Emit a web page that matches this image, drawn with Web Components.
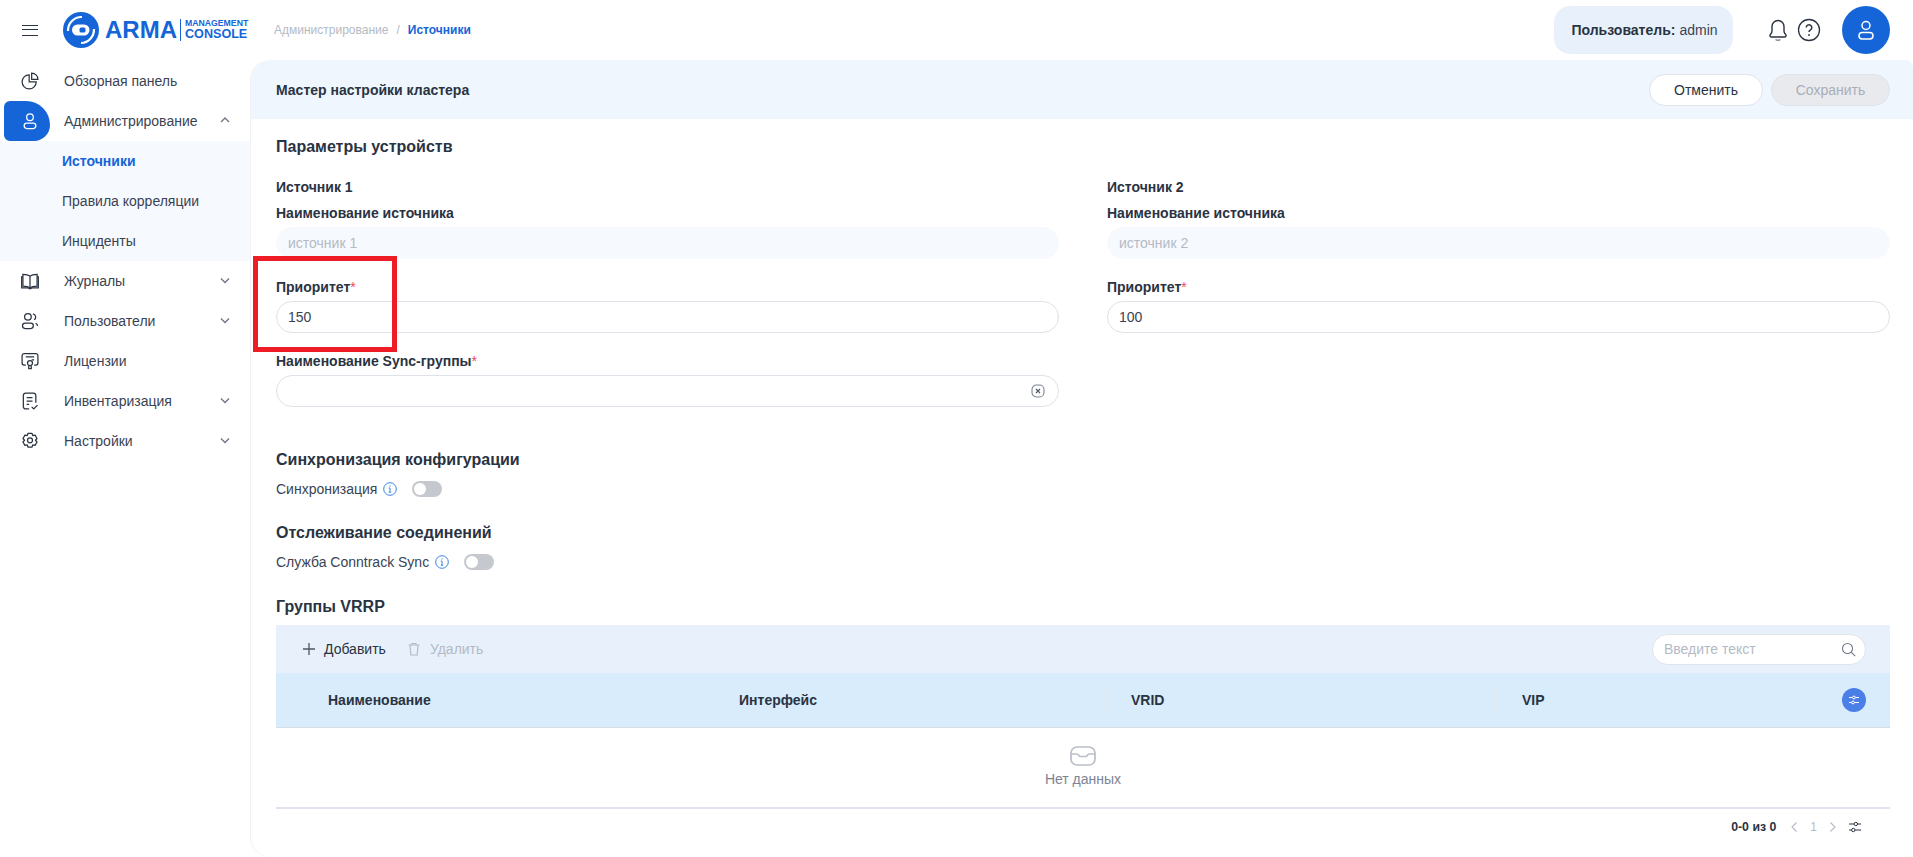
<!DOCTYPE html>
<html lang="ru">
<head>
<meta charset="utf-8">
<title>ARMA Management Console</title>
<style>
html, body { margin: 0; height: 100%; background: #fff; }
body { font-family: "Liberation Sans", Arial, sans-serif; color: #2a3342; overflow: hidden; }
</style>
</head>
<body>
<app-shell>
  <app-header slot="header"></app-header>
  <side-nav slot="nav">
    <nav-item icon="chart">Обзорная панель</nav-item>
    <nav-item icon="user" active chevron="up">Администрирование</nav-item>
    <nav-sub current>Источники</nav-sub>
    <nav-sub>Правила корреляции</nav-sub>
    <nav-sub>Инциденты</nav-sub>
    <nav-item icon="book" chevron="down">Журналы</nav-item>
    <nav-item icon="users" chevron="down">Пользователи</nav-item>
    <nav-item icon="license">Лицензии</nav-item>
    <nav-item icon="inventory" chevron="down">Инвентаризация</nav-item>
    <nav-item icon="gear" chevron="down">Настройки</nav-item>
  </side-nav>
  <cluster-wizard slot="main"></cluster-wizard>
</app-shell>

<script>
const ICONS = {
  chart: '<path d="M11 4.500a8.500 8.500 0 1 0 8.500 8.500H11z"/><path d="M14 2.500a7.500 7.500 0 0 1 7.500 7.500H14z"/>',
  user: '<circle cx="12" cy="7.500" r="4"/><rect x="5" y="14.500" width="14" height="6.500" rx="3.200"/>',
  book: '<path d="M12 6.500C10 4.500 7 4 3.500 4v14c3.500 0 6.500 .5 8.500 2.500 2-2 5-2.500 8.500-2.500V4c-3.500 0-6.500 .5-8.500 2.500z"/><path d="M12 6.500v14"/><path d="M3.500 7H2v13.200h7.500l2.500 1.300 2.500-1.300H22V7h-1.500"/>',
  users: '<circle cx="9.500" cy="7" r="4"/><rect x="3" y="14.500" width="13" height="6.500" rx="3.200"/><path d="M15.500 3.500a3.800 3.800 0 0 1 1.500 7M18.500 15a3 3 0 0 1 2.500 3"/>',
  license: '<path d="M7 17H5a2.500 2.500 0 0 1-2.500-2.500v-9A2.500 2.500 0 0 1 5 3h14a2.500 2.500 0 0 1 2.500 2.500v9A2.500 2.500 0 0 1 19 17h-2"/><path d="M7 7h10M14 10.500h3"/><circle cx="12" cy="14.500" r="3"/><path d="M10.500 18v3h3v-3"/>',
  inventory: '<path d="M11 21.500H7a3 3 0 0 1-3-3v-13a3 3 0 0 1 3-3h9a3 3 0 0 1 3 3V14"/><path d="M8 8h7M8 12h7M8 16h3"/><path d="M14 19l2.500 2.500 4.500-4.500"/>',
  gear: '<path d="M9.700 2.800h4.600l1 2.700 2.800-.5 2.300 4-1.800 2.100 1.800 2.100-2.300 4-2.800-.5-1 2.700H9.700l-1-2.700-2.800.5-2.300-4 1.800-2.100-1.800-2.100 2.300-4 2.800.5z" stroke-linejoin="round"/><circle cx="12" cy="11.100" r="3"/>'
};

// small helper so every element below stays short
function shadow(el, html) {
  el.attachShadow({ mode: "open" }).innerHTML = html;
}

class AppShell extends HTMLElement {
  constructor() {
    super();
    shadow(this, `
      <style>
        :host { display: grid; grid-template-columns: 251px 1fr; grid-template-rows: 60px 1fr; height: 857px; }
        .top { grid-column: 1 / 3; }
      </style>
      <div class="top"><slot name="header"></slot></div>
      <slot name="nav"></slot>
      <slot name="main"></slot>`);
  }
}

class AppHeader extends HTMLElement {
  constructor() {
    super();
    shadow(this, `
      <style>
        :host { display: flex; align-items: center; height: 60px; padding: 0 23px 0 22px; box-sizing: border-box; }
        .burger { width: 16px; height: 11px; border-top: 1.500px solid #2a3342; border-bottom: 1.500px solid #2a3342; position: relative; box-sizing: border-box; margin-right: 25px; }
        .burger::after { content: ""; position: absolute; left: 0; right: 0; top: 3.200px; border-top: 1.500px solid #2a3342; }
        .logo { display: flex; align-items: center; color: #1565d8; width: 211px; }
        .arma { font: 700 24px/1 "Liberation Sans", sans-serif; margin: 0 3px 0 6px; }
        .sub { border-left: 1px solid #1565d8; padding-left: 4px; height: 22px; display: flex; flex-direction: column; justify-content: center; }
        .sub b { font-size: 8.700px; line-height: 9px; font-weight: 700; }
        .sub span { font-size: 12.600px; line-height: 13px; font-weight: 700; }
        .crumbs { font-size: 12px; color: #b4bac4; display: flex; gap: 8px; flex: 1; }
        .crumbs b { color: #1565d8; font-weight: 700; }
        .pill { width: 179px; height: 48px; box-sizing: border-box; padding-left: 2px; border-radius: 16px; background: #e8f1fb; display: flex; align-items: center; justify-content: center; font-size: 14px; color: #3b4454; }
        .pill b { font-weight: 700; color: #2a3342; margin-right: 4px; }
        .tools { display: flex; align-items: center; margin: 0 21px 0 34px; gap: 8px; }
        .avatar { width: 48px; height: 48px; border-radius: 50%; background: #1565d8; display: flex; align-items: center; justify-content: center; }
        svg { display: block; }
      </style>
      <div class="burger"></div>
      <div class="logo">
        <svg width="36" height="36" viewBox="0 0 36 36">
          <circle cx="18" cy="18" r="18" fill="#1565d8"/>
          <path d="M5 19A13.500 13.500 0 0 1 19 5" fill="none" stroke="#fff" stroke-width="2.200"/>
          <path d="M31 17A13.500 13.500 0 0 1 18 31" fill="none" stroke="#fff" stroke-width="2.200"/>
          <rect x="9" y="12.500" width="17.500" height="11" rx="5.500" fill="#fff"/>
          <rect x="16.500" y="15.500" width="6" height="5" rx="1.500" fill="#1565d8"/>
        </svg>
        <span class="arma">ARMA</span>
        <span class="sub"><b>MANAGEMENT</b><span>CONSOLE</span></span>
      </div>
      <div class="crumbs"><span>Администрирование</span><span>/</span><b>Источники</b></div>
      <div class="pill"><b>Пользователь:</b> admin</div>
      <div class="tools">
        <svg width="22" height="24" viewBox="0 0 22 24" fill="none" stroke="#2a3342" stroke-width="1.400"><path d="M11 2.500a6 6 0 0 0-6 6v4.500c0 2-1.500 3-2 4.200-.3.900.3 1.800 1.300 1.800h13.400c1 0 1.600-.9 1.300-1.800-.5-1.200-2-2.200-2-4.200V8.500a6 6 0 0 0-6-6z"/><path d="M8.500 21.500c1.500 1 3.500 1 5 0" stroke="#7b8494"/></svg>
        <svg width="24" height="24" viewBox="0 0 24 24" fill="none" stroke="#2a3342" stroke-width="1.300"><circle cx="12" cy="12" r="10.500"/><path d="M9.200 9.500a2.800 2.800 0 1 1 4.300 2.400c-1 .6-1.500 1.200-1.500 2.200" stroke-width="1.500"/><circle cx="12" cy="17" r=".9" fill="#2a3342" stroke="none"/></svg>
      </div>
      <div class="avatar"><svg width="24" height="24" viewBox="0 0 24 24" fill="none" stroke="#fff" stroke-width="1.500">${ICONS.user}</svg></div>`);
  }
}

class SideNav extends HTMLElement {
  constructor() {
    super();
    shadow(this, `
      <style>:host { display: flex; flex-direction: column; padding-top: 1px; }</style>
      <slot></slot>`);
  }
}

class NavItem extends HTMLElement {
  constructor() {
    super();
    const chevron = this.getAttribute("chevron");
    const active = this.hasAttribute("active");
    const arrow = chevron ? `<svg class="chev" width="12" height="12" viewBox="0 0 12 12" fill="none" stroke="#6f7785" stroke-width="1.400"><path d="${chevron === "up" ? "M2 8l4-4 4 4" : "M2 4.500l4 4 4-4"}"/></svg>` : "";
    shadow(this, `
      <style>
        :host { display: flex; align-items: center; height: 40px; font-size: 14px; color: #3a4353; }
        .tile { width: 46px; height: 40px; margin: 0 14px 0 4px; padding-left: 6px; box-sizing: border-box; display: flex; align-items: center; justify-content: center; flex: none; }
        .tile.on { background: #1565d8; border-radius: 6px 24px 16px 6px; }
        .chev { margin: -3px 0 0 auto; margin-right: 20px; }
        svg.ic { display: block; }
      </style>
      <div class="tile ${active ? "on" : ""}">
        <svg class="ic" width="20" height="20" viewBox="0 0 24 24" fill="none" stroke="${active ? "#fff" : "#2a3342"}" stroke-width="1.500">${ICONS[this.getAttribute("icon")]}</svg>
      </div>
      <slot></slot>${arrow}`);
  }
}

class NavSub extends HTMLElement {
  constructor() {
    super();
    shadow(this, `
      <style>
        :host { display: flex; align-items: center; height: 40px; padding-left: 62px; background: #f6f9fe; font-size: 14px; color: #3a4353; }
        :host([current]) { color: #1565d8; font-weight: 700; }
      </style>
      <slot></slot>`);
  }
}

class WizardCard extends HTMLElement {
  constructor() {
    super();
    shadow(this, `
      <style>
        :host { display: block; border-radius: 20px 8px 0 20px; box-shadow: -1px 0 0 #eff1f5; overflow: hidden; min-width: 0; }
        .bar { height: 59px; background: #eff6fd; display: flex; align-items: center; padding: 0 23px 0 25px; gap: 8px; }
        .bar span { flex: 1; font-size: 14px; font-weight: 700; }
        .body { padding: 0 23px 0 25px; }
        h3 { margin: 0; font-size: 16px; line-height: 20px; font-weight: 700; }
        .cols { display: grid; grid-template-columns: 783px 783px; column-gap: 48px; }
        .cols h4 { margin: 0; font-size: 14px; line-height: 18px; font-weight: 700; }
        .col { display: flex; flex-direction: column; }
        .annot { position: absolute; left: 253px; top: 256px; width: 144px; height: 96px; box-sizing: border-box; border: 5px solid #ee1c25; pointer-events: none; }
      </style>
      <div class="bar">
        <span>Мастер настройки кластера</span>
        <wizard-btn style="width:114px">Отменить</wizard-btn>
        <wizard-btn disabled style="width:119px">Сохранить</wizard-btn>
      </div>
      <div class="body">
        <h3 style="margin-top:18px">Параметры устройств</h3>
        <div class="cols" style="margin-top:21px">
          <div class="col">
            <h4>Источник 1</h4>
            <form-field label="Наименование источника" disabled style="margin-top:8px">источник 1</form-field>
            <form-field label="Приоритет" required style="margin-top:19px">150</form-field>
            <form-field label="Наименование Sync-группы" required clear style="margin-top:19px"></form-field>
          </div>
          <div class="col">
            <h4>Источник 2</h4>
            <form-field label="Наименование источника" disabled style="margin-top:8px">источник 2</form-field>
            <form-field label="Приоритет" required style="margin-top:19px">100</form-field>
          </div>
        </div>
        <h3 style="margin-top:43px">Синхронизация конфигурации</h3>
        <toggle-row style="margin-top:9px">Синхронизация</toggle-row>
        <h3 style="margin-top:24px">Отслеживание соединений</h3>
        <toggle-row style="margin-top:9px">Служба Conntrack Sync</toggle-row>
        <h3 style="margin-top:25px">Группы VRRP</h3>
        <vrrp-table style="margin-top:8px"></vrrp-table>
      </div>
      <div class="annot"></div>`);
  }
}

class WizardBtn extends HTMLElement {
  constructor() {
    super();
    shadow(this, `
      <style>
        :host { display: flex; align-items: center; justify-content: center; height: 32px; box-sizing: border-box; border-radius: 16px; border: 1px solid #dfe3ea; background: #fff; font-size: 14px; color: #2a3342; }
        :host([disabled]) { background: #e8eaee; color: #a9aeb8; }
      </style>
      <slot></slot>`);
  }
}

class FormField extends HTMLElement {
  constructor() {
    super();
    const star = this.hasAttribute("required") ? '<i>*</i>' : "";
    const clear = this.hasAttribute("clear")
      ? `<svg width="16" height="16" viewBox="0 0 16 16" fill="none" stroke="#7b8494" stroke-width="1.100"><rect x="2" y="2" width="12" height="12" rx="4.500"/><path d="M6 6l4 4M10 6l-4 4" stroke="#4d5563"/></svg>` : "";
    shadow(this, `
      <style>
        :host { display: block; }
        label { display: block; font-size: 14px; line-height: 18px; font-weight: 700; margin-bottom: 5px; }
        i { color: #f0465a; font-style: normal; font-weight: 400; }
        .box { height: 32px; box-sizing: border-box; border: 1px solid #dfe2e8; border-radius: 16px; display: flex; align-items: center; justify-content: space-between; padding: 0 12px 0 11px; font-size: 14px; color: #3a4353; }
        :host([disabled]) .box { background: #f6f9fe; border-color: #f6f9fe; color: #b4bac4; }
        svg { display: block; }
      </style>
      <label>${this.getAttribute("label")}${star}</label>
      <div class="box"><span><slot></slot></span>${clear}</div>`);
  }
}

class ToggleRow extends HTMLElement {
  constructor() {
    super();
    shadow(this, `
      <style>
        :host { display: flex; align-items: center; gap: 6px; height: 20px; font-size: 14px; color: #3a4353; }
        svg { display: block; }
        .sw { width: 30px; height: 16px; border-radius: 8px; background: #c5c8ce; position: relative; margin-left: 9px; }
        .sw::after { content: ""; position: absolute; left: 2px; top: 2px; width: 12px; height: 12px; border-radius: 50%; background: #fff; }
      </style>
      <slot></slot>
      <svg width="14" height="14" viewBox="0 0 14 14" fill="none" stroke="#3b82e8" stroke-width="1"><circle cx="7" cy="7" r="6.300"/><path d="M7 6v4.200M5.800 6H7M5.800 10.200h2.400"/><circle cx="7" cy="3.900" r=".6" fill="#3b82e8" stroke="none"/></svg>
      <div class="sw"></div>`);
  }
}

class VrrpTable extends HTMLElement {
  constructor() {
    super();
    shadow(this, `
      <style>
        :host { display: block; font-size: 14px; }
        svg { display: block; }
        .tb { height: 48px; background: #e8f1fb; display: flex; align-items: center; padding: 0 24px 0 26px; }
        .act { display: flex; align-items: center; gap: 8px; color: #2a3342; margin-right: 20px; }
        .act.off { color: #b4bac4; }
        .search { margin-left: auto; width: 214px; height: 31px; box-sizing: border-box; border-radius: 16px; background: #fff; border: 1px solid #dfe4ec; display: flex; align-items: center; justify-content: space-between; padding: 0 9px 0 11px; color: #b4bac4; }
        .head { height: 55px; background: #d9ecfb; border-bottom: 1px solid #d5dde6; box-sizing: border-box; display: grid; grid-template-columns: 440px 391px 390px 1fr; align-items: center; font-weight: 700; }
        .head > div { padding-left: 24px; height: 24px; line-height: 24px; border-right: 1px solid #e3eaf1; }
        .head > div:first-child { padding-left: 52px; }
        .head > div:nth-child(2) { padding-left: 23px; }
        .head > div:last-child { border: 0; display: flex; justify-content: space-between; align-items: center; padding-left: 25px; padding-right: 24px; }
        .filter { width: 24px; height: 24px; border-radius: 50%; background: #4a7fe8; display: flex; align-items: center; justify-content: center; }
        .empty { height: 81px; box-sizing: border-box; border-bottom: 2px solid #dfe3ee; display: flex; flex-direction: column; align-items: center; padding-top: 18px; gap: 5px; font-size: 14px; color: #7b8494; }
        .foot { display: flex; justify-content: flex-end; align-items: center; height: 36px; padding-right: 28px; font-size: 12px; color: #b4bac4; gap: 10px; }
        .foot b { color: #2a3342; font-weight: 700; margin-right: 3px; font-size: 12.300px; }
      </style>
      <div class="tb">
        <div class="act"><svg width="14" height="14" viewBox="0 0 14 14" stroke="#4d5563" stroke-width="1.300"><path d="M7 1v12M1 7h12"/></svg>Добавить</div>
        <div class="act off"><svg width="16" height="16" viewBox="0 0 16 16" fill="none" stroke="#b4bac4" stroke-width="1.200"><path d="M2.500 4h11M6 4V2.500h4V4M4 4l.8 10h6.400L12 4"/></svg>Удалить</div>
        <div class="search">Введите текст<svg width="15" height="15" viewBox="0 0 15 15" fill="none" stroke="#6f7785" stroke-width="1.100"><circle cx="6.500" cy="6.500" r="5"/><path d="M10.200 10.200l4 4"/></svg></div>
      </div>
      <div class="head">
        <div>Наименование</div><div>Интерфейс</div><div>VRID</div>
        <div>VIP<span class="filter"><svg width="14" height="14" viewBox="0 0 14 14" fill="none" stroke="#fff" stroke-width="1"><path d="M2 4.500h3.500M8.500 4.500H12M2 9.500h2.500M7.500 9.500H12"/><circle cx="7" cy="4.500" r="1.400"/><circle cx="6" cy="9.500" r="1.400"/></svg></span></div>
      </div>
      <div class="empty">
        <svg width="26" height="20" viewBox="0 0 26 20" fill="none" stroke="#b9bec7" stroke-width="1.700"><rect x="1" y="1" width="24" height="18" rx="6"/><path d="M1.500 8h5.500c1.500 0 1.800 2.500 3.500 2.500h5c1.700 0 2-2.500 3.500-2.500h5.500"/></svg>
        <span>Нет данных</span>
      </div>
      <div class="foot">
        <b>0-0 из 0</b>
        <svg width="11" height="12" viewBox="0 0 11 12" fill="none" stroke="#b4bac4" stroke-width="1.100"><path d="M7.500 1.500L3 6l4.500 4.500"/></svg>
        <span>1</span>
        <svg width="11" height="12" viewBox="0 0 11 12" fill="none" stroke="#b4bac4" stroke-width="1.100"><path d="M3.500 1.500L8 6l-4.500 4.500"/></svg>
        <svg width="14" height="14" viewBox="0 0 14 14" fill="none" stroke="#2a3342" stroke-width="1"><path d="M1 4h5M9.500 4H13M1 10h2.500M7 10h6"/><circle cx="7.800" cy="4" r="1.700"/><circle cx="5.300" cy="10" r="1.700"/></svg>
      </div>`);
  }
}

customElements.define("app-shell", AppShell);
customElements.define("app-header", AppHeader);
customElements.define("side-nav", SideNav);
customElements.define("nav-item", NavItem);
customElements.define("nav-sub", NavSub);
customElements.define("cluster-wizard", WizardCard);
customElements.define("wizard-btn", WizardBtn);
customElements.define("form-field", FormField);
customElements.define("toggle-row", ToggleRow);
customElements.define("vrrp-table", VrrpTable);
</script>
</body>
</html>
